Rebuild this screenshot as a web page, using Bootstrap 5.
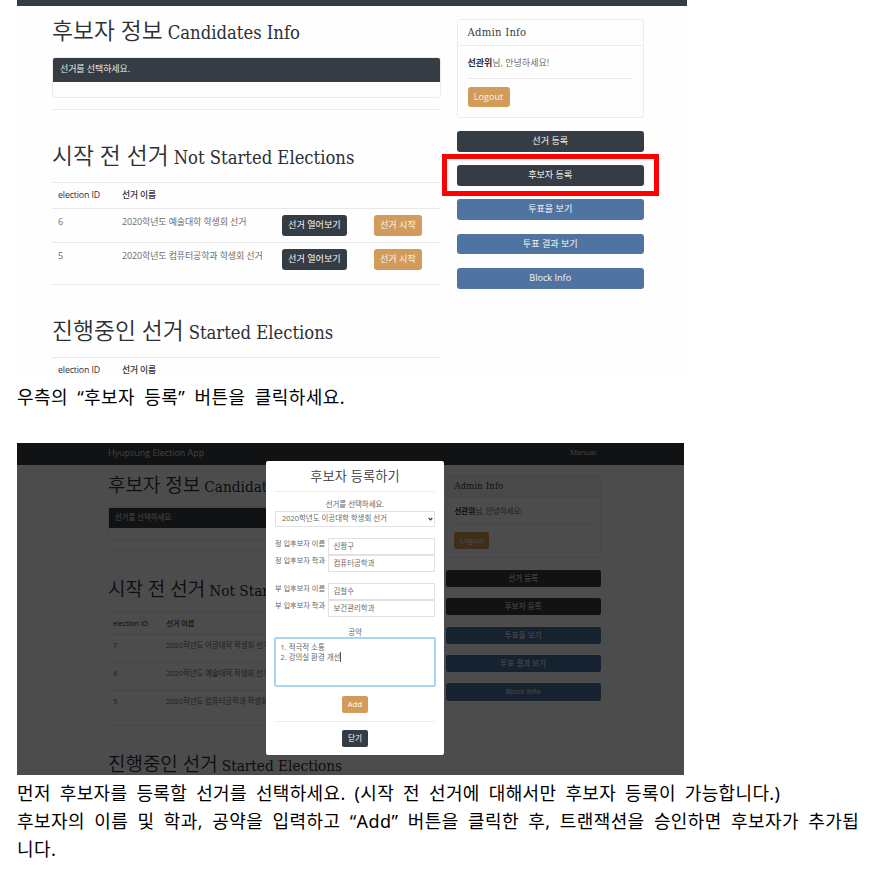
<!DOCTYPE html>
<html lang="ko">
<head>
<meta charset="utf-8">
<title>Hyupsung Election App Manual</title>
<link rel="stylesheet" href="https://cdn.jsdelivr.net/npm/bootstrap@5.3.0/dist/css/bootstrap.min.css">
<style>
body{width:874px;height:877px;overflow:hidden;background:#fff;color:#000;font-family:"Open Sans","Noto Sans CJK KR",sans-serif;padding-left:17px}
.caption-text{font:400 18px/28px "Noto Sans","Noto Sans CJK KR",sans-serif;letter-spacing:.42px;word-spacing:4.2px;white-space:nowrap;color:#000}
.tight{letter-spacing:.34px;word-spacing:4px}
.after-first{padding-top:7px;height:67px}
.after-second{padding-top:4px}
.screen{--u:1px;font-size:calc(var(--u)*9);line-height:1.5;color:#6a6d70;background:#fefefe}
.screen-one{width:670px;height:376px}
.screen-two{--u:.8325px;width:667px;height:332px;background:#fff}
.topbar{background:#363c43;height:6px}
.screen-two .topbar{height:21.5px;padding:0 88px 2px 91px;font-size:8.95px;color:#ddd}
.topbar .link{font-size:7.4px}
.page-grid{padding-left:35px;gap:calc(var(--u)*16.5)}
.screen-two .page-grid{padding-left:91px}
.main-col{width:calc(var(--u)*389)}
.side-col{width:calc(var(--u)*186.5);padding-top:calc(var(--u)*13)}
.screen-one .side-col{margin-left:-.5px}
.sec-title{height:calc(var(--u)*51);margin:0;font-size:calc(var(--u)*22.8);line-height:calc(var(--u)*49);font-weight:350;color:#2c2f33;white-space:nowrap}
.sec-title .en{font-family:"DejaVu Serif Condensed","DejaVu Serif",serif;font-stretch:condensed;font-size:calc(var(--u)*18.3);margin-left:calc(var(--u)*-1);font-weight:400}
.ruled{border-top:1px solid #ebebeb;padding-top:calc(var(--u)*20.9)}
.screen-two .ruled{padding-top:18.1px}
.pick-card{height:calc(var(--u)*40.5);margin-bottom:calc(var(--u)*11.5);border:1px solid #ececec;border-radius:calc(var(--u)*3);overflow:hidden}
.pick-head{background:#363c43;color:#e8e8e8;height:calc(var(--u)*23.5);padding:0 calc(var(--u)*7);line-height:calc(var(--u)*22);letter-spacing:calc(var(--u)*-.1)}
.vote-table{table-layout:fixed;width:100%;border-collapse:separate;border-spacing:0}
.vote-table td,.vote-table th{border-top:1px solid #e8e8e8;padding:0 0 0 calc(var(--u)*6);height:calc(var(--u)*34);vertical-align:top;white-space:nowrap;line-height:calc(var(--u)*25);letter-spacing:calc(var(--u)*-.14)}
.vote-table th{height:calc(var(--u)*26.4);color:#2c2f33;font-weight:500;font-size:calc(var(--u)*8.8)}
.vote-table tr:last-child td{height:calc(var(--u)*42)}
.c1{width:16.45%}.c2{width:41.1%}.c3{width:23.65%}
.vote-table .btn{margin-top:calc(var(--u)*6)}
.act{--bs-btn-color:#fff;--bs-btn-border-width:0;--bs-btn-padding-x:calc(var(--u)*7);--bs-btn-padding-y:0px;--bs-btn-border-radius:calc(var(--u)*3);--bs-btn-font-size:calc(var(--u)*9.1);height:calc(var(--u)*20.8);line-height:calc(var(--u)*20.8);color:#f6f6f6;white-space:nowrap;display:block}
.ink{background:#363c43}.amber{background:#d39b59}.blue{background:#4f74a2}
.w-open{width:calc(var(--u)*65)}.w-start{width:calc(var(--u)*48)}.w-out{width:calc(var(--u)*42)}
.info-card{height:calc(var(--u)*99);margin-bottom:calc(var(--u)*13);border:1px solid #ececec;border-radius:calc(var(--u)*3)}
.screen-two .info-card{margin-bottom:11.9px}
.info-head{height:calc(var(--u)*26);padding-left:calc(var(--u)*9.5);border-bottom:1px solid #ececec;font:calc(var(--u)*11.2)/calc(var(--u)*25) "DejaVu Serif Condensed","DejaVu Serif",serif;font-stretch:condensed;letter-spacing:calc(var(--u)*.25);color:#3b3f43}
.screen-two .info-head{background:#f4f4f4}
.info-body{padding:0 calc(var(--u)*9.5)}
.info-body p{height:calc(var(--u)*31.5);line-height:calc(var(--u)*33);margin:0}
.info-body b{color:#2c2f33;font-weight:600}
.info-line{border-top:1px solid #e8e8e8;height:calc(var(--u)*9)}
.side-actions{gap:calc(var(--u)*13.4)}
.focus-frame{left:425px;top:154px;width:217px;height:42px;border:5px solid #f00}
.shade{background:rgba(0,0,0,.7)}
.dialog-box{left:249px;top:18px;width:178px;height:293.5px;background:#fff;border-radius:2px;padding:0 9px;font-size:7.45px;line-height:10px;color:#666}
.dialog-box h2{font-size:13.2px;line-height:30px;height:30px;margin:0;font-weight:350;color:#34373a;letter-spacing:.15px}
.thin{border-top:1px solid #ededed}
.pick-label{padding-top:7px;height:18.5px}
.field{border:1px solid #e2e2e2;height:17px;line-height:15px;padding-left:5px;white-space:nowrap;color:#6a6a6a}
.pick-field{height:16.5px;padding-left:6px}
.pair{height:17.25px}
.pair label{width:52.5px;white-space:nowrap;font-size:7.2px;line-height:11px}
.first-pairs{padding-top:10.5px;height:55.5px}
.second-pairs{height:44.5px}
.pledge{height:50px;margin:0 -1px;border:2px solid #a9d4f4;border-radius:2px;padding:2.5px 4.5px;line-height:10.5px}
.dialog-box .btn{width:25.5px;height:17px;line-height:17px;padding:0;font-size:7.7px;border-radius:2px;border:0}
.dialog-actions{padding-top:1.3px}
.chev{width:5px;height:4px;margin-right:1.5px}
.caret{border-right:1px solid #555}
</style>
<script src="https://cdn.jsdelivr.net/npm/bootstrap@5.3.0/dist/js/bootstrap.bundle.min.js"></script>
</head>
<body>
<section class="screen screen-one position-relative overflow-hidden">
  <div class="topbar"></div>
  <div class="page-grid d-flex align-items-start">
    <main class="main-col">
      <h1 class="sec-title">후보자 정보 <span class="en">Candidates Info</span></h1>
      <div class="pick-card"><div class="pick-head">선거를 선택하세요.</div></div>
      <div class="ruled">
        <h1 class="sec-title">시작 전 선거 <span class="en">Not Started Elections</span></h1>
        <table class="vote-table">
          <thead><tr><th class="c1">election ID</th><th class="c2">선거 이름</th><th class="c3"></th><th></th></tr></thead>
          <tbody>
            <tr><td>6</td><td>2020학년도 예술대학 학생회 선거</td><td><button class="btn act ink w-open px-0">선거 열어보기</button></td><td><button class="btn act amber w-start px-0">선거 시작</button></td></tr>
            <tr><td>5</td><td>2020학년도 컴퓨터공학과 학생회 선거</td><td><button class="btn act ink w-open px-0">선거 열어보기</button></td><td><button class="btn act amber w-start px-0">선거 시작</button></td></tr>
          </tbody>
        </table>
      </div>
      <div class="ruled">
        <h1 class="sec-title">진행중인 선거 <span class="en">Started Elections</span></h1>
        <table class="vote-table">
          <thead><tr><th class="c1">election ID</th><th>선거 이름</th></tr></thead>
        </table>
      </div>
    </main>
    <aside class="side-col">
      <div class="info-card">
        <div class="info-head">Admin Info</div>
        <div class="info-body"><p><b>선관위</b>님, 안녕하세요!</p><div class="info-line"></div><button class="btn act amber w-out px-0">Logout</button></div>
      </div>
      <div class="side-actions d-flex flex-column">
        <button class="btn act ink">선거 등록</button>
        <button class="btn act ink">후보자 등록</button>
        <button class="btn act blue">투표율 보기</button>
        <button class="btn act blue">투표 결과 보기</button>
        <button class="btn act blue">Block Info</button>
      </div>
    </aside>
  </div>
  <div class="focus-frame position-absolute"></div>
</section>
<p class="caption-text after-first mb-0">우측의 “후보자 등록” 버튼을 클릭하세요.</p>
<section class="screen screen-two position-relative overflow-hidden">
  <nav class="topbar d-flex justify-content-between align-items-center"><span>Hyupsung Election App</span><span class="link">Manual</span></nav>
  <div class="page-grid d-flex align-items-start">
    <main class="main-col">
      <h1 class="sec-title">후보자 정보 <span class="en">Candidates Info</span></h1>
      <div class="pick-card"><div class="pick-head">선거를 선택하세요.</div></div>
      <div class="ruled">
        <h1 class="sec-title">시작 전 선거 <span class="en">Not Started Elections</span></h1>
        <table class="vote-table">
          <thead><tr><th class="c1">election ID</th><th>선거 이름</th></tr></thead>
          <tbody>
            <tr><td>7</td><td>2020학년도 이공대학 학생회 선거</td></tr>
            <tr><td>6</td><td>2020학년도 예술대학 학생회 선거</td></tr>
            <tr><td>5</td><td>2020학년도 컴퓨터공학과 학생회 선거</td></tr>
          </tbody>
        </table>
      </div>
      <div class="ruled">
        <h1 class="sec-title">진행중인 선거 <span class="en">Started Elections</span></h1>
      </div>
    </main>
    <aside class="side-col">
      <div class="info-card">
        <div class="info-head">Admin Info</div>
        <div class="info-body"><p><b>선관위</b>님, 안녕하세요!</p><div class="info-line"></div><button class="btn act amber w-out px-0">Logout</button></div>
      </div>
      <div class="side-actions d-flex flex-column">
        <button class="btn act ink">선거 등록</button>
        <button class="btn act ink">후보자 등록</button>
        <button class="btn act blue">투표율 보기</button>
        <button class="btn act blue">투표 결과 보기</button>
        <button class="btn act blue">Block Info</button>
      </div>
    </aside>
  </div>
  <div class="shade position-absolute top-0 start-0 w-100 h-100"></div>
  <div class="dialog-box position-absolute">
    <h2 class="text-center">후보자 등록하기</h2>
    <div class="thin"></div>
    <div class="pick-label text-center">선거를 선택하세요.</div>
    <div class="field pick-field d-flex justify-content-between align-items-center"><span>2020학년도 이공대학 학생회 선거</span><svg class="chev" viewBox="0 0 5 4"><path d="M.7 1 2.5 2.9 4.3 1" fill="none" stroke="#333" stroke-width="1.1"/></svg></div>
    <div class="first-pairs">
      <div class="pair d-flex"><label>정 입후보자 이름</label><div class="field flex-fill">신짱구</div></div>
      <div class="pair d-flex"><label>정 입후보자 학과</label><div class="field flex-fill">컴퓨터공학과</div></div>
    </div>
    <div class="second-pairs">
      <div class="pair d-flex"><label>부 입후보자 이름</label><div class="field flex-fill">김철수</div></div>
      <div class="pair d-flex"><label>부 입후보자 학과</label><div class="field flex-fill">보건관리학과</div></div>
    </div>
    <div class="text-center">공약</div>
    <div class="pledge">1. 적극적 소통<br>2. 강의실 환경 개선<span class="caret"></span></div>
    <div class="dialog-actions d-flex flex-column align-items-center">
      <button class="btn amber text-white mt-2 mb-1">Add</button>
      <div class="thin w-100 mt-1 mb-2"></div>
      <button class="btn ink text-white">닫기</button>
    </div>
  </div>
</section>
<p class="caption-text after-second mb-0"><span class="tight">먼저 후보자를 등록할 선거를 선택하세요. (시작 전 선거에 대해서만 후보자 등록이 가능합니다.)</span><br>후보자의 이름 및 학과, 공약을 입력하고 “Add” 버튼을 클릭한 후, 트랜잭션을 승인하면 후보자가 추가됩<br>니다.</p>
</body>
</html>
